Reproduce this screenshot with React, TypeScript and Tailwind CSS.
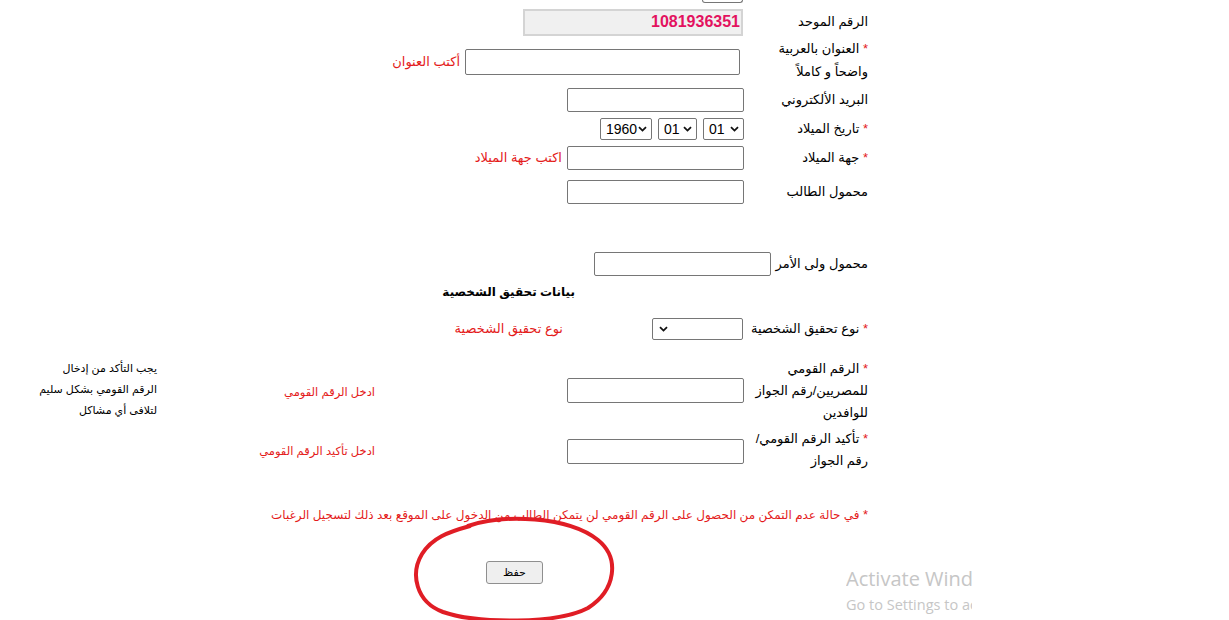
import React from "react";

function Chevron() {
  return (
    <svg width="9" height="6" viewBox="0 0 9 6" className="shrink-0">
      <path d="M1 1.2 L4.5 4.6 L8 1.2" fill="none" stroke="#111" strokeWidth="1.8" />
    </svg>
  );
}

function DateSelect({ value, width }: { value: string; width: string }) {
  return (
    <div
      dir="ltr"
      className={`${width} flex h-[22px] items-center justify-between rounded-[2px] border border-[#767676] bg-white pl-[5px] pr-[4px] text-[14px] font-['Liberation_Sans',sans-serif]`}
    >
      <span>{value}</span>
      <Chevron />
    </div>
  );
}

const red = "text-[#e41b1b]";

export default function App() {
  return (
    <div className="relative h-[620px] overflow-hidden bg-white text-[13px] leading-[22px] text-black font-['Liberation_Sans','DejaVu_Sans',sans-serif]">
      <div dir="rtl" className="w-[868px]">
        {/* bottom of the cut-off control at the top */}
        <div className="flex h-[8px]">
          <div className="mr-[125px] h-[3px] w-[41px] rounded-b-[3px] border border-t-0 border-[#767676]" />
        </div>

        {/* unified number */}
        <div className="flex h-[28px] items-center">
          <div className="w-[125px]">الرقم الموحد</div>
          <input
            readOnly
            value="1081936351"
            className="h-[27px] w-[220px] border-2 border-[#d4d4d4] bg-[#f0f0f0] px-[1px] text-[16px] font-bold text-[#e3125f] outline-none"
          />
        </div>

        {/* address */}
        <div className="mt-[1px] flex items-start">
          <div className="w-[128px] leading-[23px] whitespace-nowrap">
            <span className={red}>*</span> العنوان بالعربية
            <br />
            واضحاً و كاملاً
          </div>
          <div className="mt-[12px] flex items-center gap-[5px]">
            <input className="h-[26px] w-[275px] rounded-[2px] border border-[#767676] bg-white" />
            <span className={red}>أكتب العنوان</span>
          </div>
        </div>

        {/* email */}
        <div className="mt-[5px] flex h-[24px] items-center">
          <div className="w-[124px]">البريد الألكتروني</div>
          <input className="h-[24px] w-[177px] rounded-[2px] border border-[#767676] bg-white" />
        </div>

        {/* birth date */}
        <div className="mt-[6px] flex h-[22px] items-center">
          <div className="w-[124px]">
            <span className={red}>*</span> تاريخ الميلاد
          </div>
          <div className="flex gap-[6px]">
            <DateSelect value="01" width="w-[41px]" />
            <DateSelect value="01" width="w-[39px]" />
            <DateSelect value="1960" width="w-[52px]" />
          </div>
        </div>

        {/* birth place */}
        <div className="mt-[6px] flex h-[24px] items-center">
          <div className="w-[124px]">
            <span className={red}>*</span> جهة الميلاد
          </div>
          <div className="flex items-center gap-[5px]">
            <input className="h-[24px] w-[177px] rounded-[2px] border border-[#767676] bg-white" />
            <span className={red}>اكتب جهة الميلاد</span>
          </div>
        </div>

        {/* student mobile */}
        <div className="mt-[10px] flex h-[24px] items-center">
          <div className="w-[124px]">محمول الطالب</div>
          <input className="h-[24px] w-[177px] rounded-[2px] border border-[#767676] bg-white" />
        </div>

        {/* guardian mobile */}
        <div className="mt-[48px] flex h-[24px] items-center">
          <div className="w-[97px]">محمول ولى الأمر</div>
          <input className="h-[24px] w-[177px] rounded-[2px] border border-[#767676] bg-white" />
        </div>

        <div className="mt-[5px] flex">
          <div className="mr-[293px] text-[12px] font-bold">بيانات تحقيق الشخصية</div>
        </div>

        {/* id type */}
        <div className="mt-[15px] flex h-[22px] items-center">
          <div className="w-[125px]">
            <span className={red}>*</span> نوع تحقيق الشخصية
          </div>
          <div className="flex h-[22px] w-[91px] items-center rounded-[2px] border border-[#767676] bg-white pr-[5px]">
            <span className="mr-auto pl-[6px]">
              <Chevron />
            </span>
          </div>
          <div className={`mr-[89px] ${red}`}>نوع تحقيق الشخصية</div>
        </div>

        {/* national id */}
        <div className="mt-[18px] flex items-start">
          <div className="w-[124px] whitespace-nowrap leading-[22px]">
            <span className={red}>*</span> الرقم القومي
            <br />
            للمصريين/رقم الجواز
            <br />
            للوافدين
          </div>
          <input className="mt-[20px] h-[25px] w-[177px] rounded-[2px] border border-[#767676] bg-white" />
          <div className={`mr-[192px] mt-[23px] w-[218px] text-[11.5px] ${red}`}>ادخل الرقم القومي</div>
          <div className="text-[11px] leading-[21px] whitespace-nowrap">
            يجب التأكد من إدخال
            <br />
            الرقم القومي بشكل سليم
            <br />
            لتلافى أي مشاكل
          </div>
        </div>

        {/* confirm national id */}
        <div className="mt-[4px] flex items-start">
          <div className="w-[124px] whitespace-nowrap leading-[22px]">
            <span className={red}>*</span> تأكيد الرقم القومي/
            <br />
            رقم الجواز
          </div>
          <input className="mt-[11px] h-[25px] w-[177px] rounded-[2px] border border-[#767676] bg-white" />
          <div className={`mr-[192px] mt-[12px] text-[11.5px] ${red}`}>ادخل تأكيد الرقم القومي</div>
        </div>

        <div className={`mt-[32px] whitespace-nowrap text-[12px] ${red}`}>
          <span className="text-[13px]">*</span> في حالة عدم التمكن من الحصول على الرقم القومي لن يتمكن الطالب من الدخول على الموقع بعد ذلك لتسجيل الرغبات
        </div>

        <div className="mt-[35px] flex">
          <button className="mr-[325px] h-[23px] w-[57px] rounded-[3px] border border-[#8f8f8f] bg-[#efefef] text-[11px] leading-none">
            حفظ
          </button>
        </div>
      </div>

      {/* hand-drawn red ellipse around the save button */}
      <svg className="pointer-events-none absolute left-[408px] top-[512px]" width="212" height="112" viewBox="0 0 212 112">
        <path
          d="M60 14 C95 2 160 4 190 28 C212 46 208 78 180 96 C150 112 70 112 35 100 C8 90 2 62 14 42 C24 26 40 20 62 14"
          fill="none"
          stroke="#e01d25"
          strokeWidth="4"
          strokeLinecap="round"
        />
      </svg>

      {/* windows activation watermark, cut off on the right */}
      <div className="pointer-events-none absolute left-[846px] top-[565px] w-[126px] overflow-hidden whitespace-nowrap font-['Open_Sans',sans-serif] text-[#c6c6c6]">
        <div className="text-[20px] leading-[28px]">Activate Windows</div>
        <div className="text-[14.5px] leading-[24px]">Go to Settings to activate Windows.</div>
      </div>
    </div>
  );
}
